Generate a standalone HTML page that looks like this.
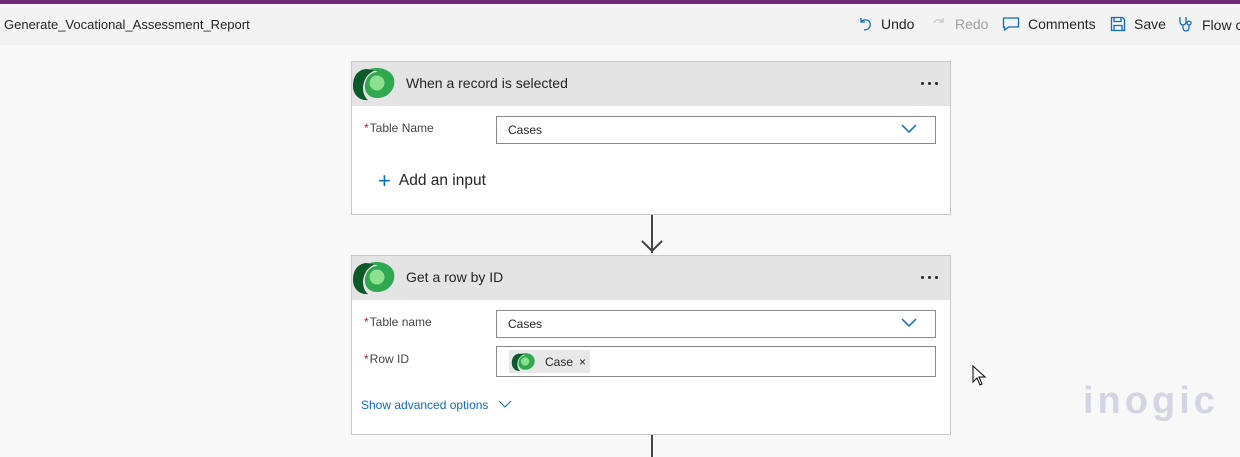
<!DOCTYPE html>
<html><head><meta charset="utf-8"><style>
*{box-sizing:border-box;margin:0;padding:0}
body{width:1240px;height:457px;overflow:hidden;background:#f8f8f8;font-family:"Segoe UI","Liberation Sans",sans-serif;color:#252423;position:relative}
.top{position:absolute;left:0;top:0;width:1240px;height:4px;background:#742774}
.bar{position:absolute;left:0;top:4px;width:1240px;height:41px;background:#f3f3f3}
.title{position:absolute;left:4px;top:17px;font-size:13px}
.tb{position:absolute;top:16px;font-size:14px;display:flex;align-items:center;white-space:nowrap}
.card{position:absolute;left:351px;width:600px;background:#fff;border:1px solid #c8c8c8}
.hd{height:44px;background:#e4e4e4;position:relative}
.hd .t{position:absolute;left:54px;top:13px;font-size:14px}
.dots{position:absolute;right:12px;top:20px;display:flex;gap:4px}
.dots i{width:3px;height:3px;background:#252423;border-radius:50%}
.logo{position:absolute;left:0px;top:4px}
.lbl{position:absolute;left:12px;font-size:12px;color:#444}
.lbl b{color:#a4262c;font-weight:normal;margin-right:1px}
.inp{position:absolute;left:144px;width:440px;height:28px;border:1px solid #8a8886;font-size:12px;padding:6px 11px}
.chev{position:absolute;right:18px;top:7px}
.line{position:absolute;left:651px;width:2px;background:#444}
</style></head><body>
<div class="top"></div>
<div class="bar"></div>
<div class="title">Generate_Vocational_Assessment_Report</div>
<div class="tb" style="left:857px"><svg width="16" height="16" viewBox="0 0 16 16"><path d="M4 2v4h4M4 6c2-3 8-3 9 1s-2 7-6 7" fill="none" stroke="#0f6cbd" stroke-width="1.3"/></svg><span style="margin-left:8px">Undo</span></div>
<div class="tb" style="left:931px;color:#a19f9d"><svg width="16" height="16" viewBox="0 0 16 16"><path d="M12 2v4H8M12 6C10 3 4 3 3 7" fill="none" stroke="#c8c6c4" stroke-width="1.3"/></svg><span style="margin-left:8px">Redo</span></div>
<div class="tb" style="left:1002px"><svg width="18" height="16" viewBox="0 0 18 16"><path d="M1.5 2h15v9h-10l-4 3v-3h-1z" fill="none" stroke="#0f6cbd" stroke-width="1.3"/></svg><span style="margin-left:8px">Comments</span></div>
<div class="tb" style="left:1110px"><svg width="16" height="16" viewBox="0 0 16 16"><path d="M1.5 1.5h11l2 2v11h-13z M4 1.5v4h7v-4 M4 14.5v-5h8v5" fill="none" stroke="#0f6cbd" stroke-width="1.3"/></svg><span style="margin-left:8px">Save</span></div>
<div class="tb" style="left:1178px"><svg width="16" height="18" viewBox="0 0 16 18"><path d="M2 1v5a3 3 0 0 0 6 0V1M5 9v3a3 3 0 0 0 6 0V9" fill="none" stroke="#0f6cbd" stroke-width="1.3"/><circle cx="11" cy="7" r="2" fill="none" stroke="#0f6cbd" stroke-width="1.3"/></svg><span style="margin-left:8px">Flow c</span></div>

<div class="card" style="top:61px;height:154px">
 <div class="hd"><svg class="logo" width="46" height="36" viewBox="0 0 46 36"><path d="M14 3C5 4 1 11 1 20c0 9 7 15 15 14 -5-4-6-12-4-18 2-6 6-10 12-12z" fill="#0b5a2a"/><path d="M18 3c10-3 22 1 24 10 2 10-6 19-17 19-8 0-13-6-12-13 1-8 6-13 13-13" fill="#2fa84f"/><circle cx="25" cy="17" r="7.5" fill="#8de08e"/></svg><span class="t">When a record is selected</span><span class="dots"><i></i><i></i><i></i></span></div>
 <div class="lbl" style="top:59px"><b>*</b>Table Name</div>
 <div class="inp" style="top:54px">Cases<svg class="chev" width="16" height="10" viewBox="0 0 16 10"><path d="M1 1l7 7 7-7" fill="none" stroke="#0f6cbd" stroke-width="1.5"/></svg></div>
 <div style="position:absolute;left:26px;top:106px;font-size:15.5px;color:#252423"><span style="color:#0f6cbd;font-size:22px;vertical-align:-3px;margin-right:8px">+</span>Add an input</div>
</div>
<div class="line" style="top:215px;height:38px"></div>
<svg style="position:absolute;left:641px;top:238px" width="22" height="16" viewBox="0 0 22 16"><path d="M1 3l10 10 10-10" fill="none" stroke="#444" stroke-width="2"/></svg>

<div class="card" style="top:255px;height:180px">
 <div class="hd"><svg class="logo" width="46" height="36" viewBox="0 0 46 36"><path d="M14 3C5 4 1 11 1 20c0 9 7 15 15 14 -5-4-6-12-4-18 2-6 6-10 12-12z" fill="#0b5a2a"/><path d="M18 3c10-3 22 1 24 10 2 10-6 19-17 19-8 0-13-6-12-13 1-8 6-13 13-13" fill="#2fa84f"/><circle cx="25" cy="17" r="7.5" fill="#8de08e"/></svg><span class="t">Get a row by ID</span><span class="dots"><i></i><i></i><i></i></span></div>
 <div class="lbl" style="top:59px"><b>*</b>Table name</div>
 <div class="inp" style="top:54px">Cases<svg class="chev" width="16" height="10" viewBox="0 0 16 10"><path d="M1 1l7 7 7-7" fill="none" stroke="#0f6cbd" stroke-width="1.5"/></svg></div>
 <div class="lbl" style="top:96px"><b>*</b>Row ID</div>
 <div class="inp" style="top:90px;height:31px;padding:3px 12px"><span style="display:inline-flex;align-items:center;background:#e8e8e8;height:23px;padding:0 4px 0 2px;font-size:12px"><svg width="26" height="20" viewBox="0 0 46 36"><path d="M14 3C5 4 1 11 1 20c0 9 7 15 15 14 -5-4-6-12-4-18 2-6 6-10 12-12z" fill="#0b5a2a"/><path d="M18 3c10-3 22 1 24 10 2 10-6 19-17 19-8 0-13-6-12-13 1-8 6-13 13-13" fill="#2fa84f"/><circle cx="25" cy="17" r="7.5" fill="#8de08e"/></svg><span style="margin-left:8px">Case</span><span style="margin-left:6px">×</span></span></div>
 <div style="position:absolute;left:9px;top:142px;font-size:12px;color:#0f6cbd">Show advanced options <svg width="14" height="9" viewBox="0 0 14 9" style="margin-left:6px"><path d="M1 1l6 6 6-6" fill="none" stroke="#0f6cbd" stroke-width="1"/></svg></div>
</div>
<div class="line" style="top:435px;height:22px"></div>
<svg style="position:absolute;left:972px;top:365px" width="14" height="22" viewBox="0 0 14 22"><path d="M1 1v16l4-4 3 7 2-1-3-7h6z" fill="#fff" stroke="#000" stroke-width="1"/></svg>
<div style="position:absolute;left:1083px;top:380px;font-size:38px;font-weight:bold;color:#d3d6e2;letter-spacing:4px;font-family:'Liberation Sans',sans-serif">inogic</div>
</body></html>
